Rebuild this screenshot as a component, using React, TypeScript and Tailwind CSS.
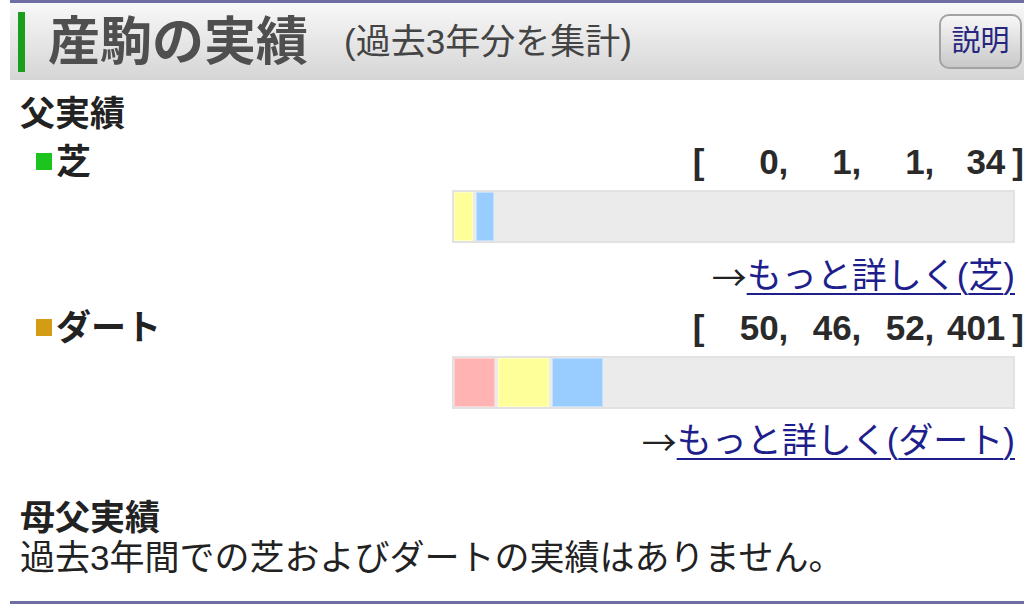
import React from "react";

const FONT = { fontFamily: '"Liberation Sans", "Noto Sans CJK JP", sans-serif' };
const CJK = { fontFamily: '"Noto Sans CJK JP", sans-serif' };

function Numbers({ values }: { values: number[] }) {
  return (
    <div className="flex items-center font-bold text-[35px] text-[#2a2a2a] leading-none">
      <span>[</span>
      {values.map((v, i) => (
        <span key={i} className={`text-right ${i === 0 ? "w-[84px]" : i === 3 ? "w-[71px]" : "w-[73px]"}`}>
          {v}
          {i < 3 ? "," : ""}
        </span>
      ))}
      <span className="pl-[7px]">]</span>
    </div>
  );
}

function Bar({ segs }: { segs: { w: number; c: string }[] }) {
  return (
    <div className="ml-auto mr-[9px] w-[563px] h-[53px] bg-[#ebebeb] border-2 border-[#e2e2e2] flex gap-[3px]">
      {segs.map((s, i) => (
        <div key={i} className={`h-full border border-white/40 ${s.c}`} style={{ width: s.w }} />
      ))}
    </div>
  );
}

function Row({ color, label, values }: { color: string; label: string; values: number[] }) {
  return (
    <div className="flex items-center justify-between h-[40px]">
      <div className="flex items-center">
        <span className={`ml-[16px] w-[16px] h-[17px] ${color}`} />
        <span className="ml-[4px] text-[35px] font-bold text-[#222] leading-none">{label}</span>
      </div>
      <Numbers values={values} />
    </div>
  );
}

function More({ label }: { label: string }) {
  return (
    <div className="h-[40px] flex items-center justify-end pr-[9px] text-[35px] leading-none">
      <span className="text-[#222]" style={CJK}>→</span>
      <a href="#" className="text-[#1e1e8c] underline underline-offset-[5px] decoration-2">
        もっと詳しく({label})
      </a>
    </div>
  );
}

export default function App() {
  return (
    <div className="w-[1024px] h-[604px] overflow-hidden bg-white pl-[10px]" style={FONT}>
      <div className="border-t-[3px] border-[#6e6ea2]">
        <div className="h-[77px] flex items-center bg-gradient-to-b from-[#f8f8f8] to-[#d5d5d5]">
          <div className="ml-[8px] w-[7px] h-[60px] bg-[#1b9e1b]" />
          <span className="ml-[23px] text-[52px] font-bold text-[#4f4f4f] leading-none">産駒の実績</span>
          <span className="ml-[36px] text-[35px] text-[#444] leading-none">(過去3年分を集計)</span>
          <button className="ml-auto mr-[2px] w-[83px] h-[55px] rounded-[10px] border-2 border-[#a3a3a3] bg-gradient-to-b from-[#f7f7f7] to-[#c9c9c9] text-[29px] text-[#26267e] leading-none">
            説明
          </button>
        </div>
      </div>

      <div className="pl-[10px]">
        <div className="mt-[13px] h-[40px] flex items-center text-[35px] font-bold text-[#222] leading-none">父実績</div>

        <div className="mt-[8px]">
          <Row color="bg-[#1ec41e]" label="芝" values={[0, 1, 1, 34]} />
        </div>
        <div className="mt-[9px]">
          <Bar segs={[{ w: 19, c: "bg-[#ffff99]" }, { w: 18, c: "bg-[#99ccff]" }]} />
        </div>
        <div className="mt-[12px]">
          <More label="芝" />
        </div>

        <div className="mt-[12px]">
          <Row color="bg-[#d49b14]" label="ダート" values={[50, 46, 52, 401]} />
        </div>
        <div className="mt-[9px]">
          <Bar
            segs={[
              { w: 41, c: "bg-[#ffb3b3]" },
              { w: 51, c: "bg-[#ffff99]" },
              { w: 51, c: "bg-[#99ccff]" },
            ]}
          />
        </div>
        <div className="mt-[11px]">
          <More label="ダート" />
        </div>

        <div className="mt-[37px] h-[40px] flex items-center text-[35px] font-bold text-[#222] leading-none">母父実績</div>
        <div className="h-[40px] flex items-center text-[35px] text-[#222] leading-none">
          過去3年間での芝およびダートの実績はありません。
        </div>
      </div>

      <div className="mt-[24px] border-t-[3px] border-[#6e6ea2]" />
    </div>
  );
}
